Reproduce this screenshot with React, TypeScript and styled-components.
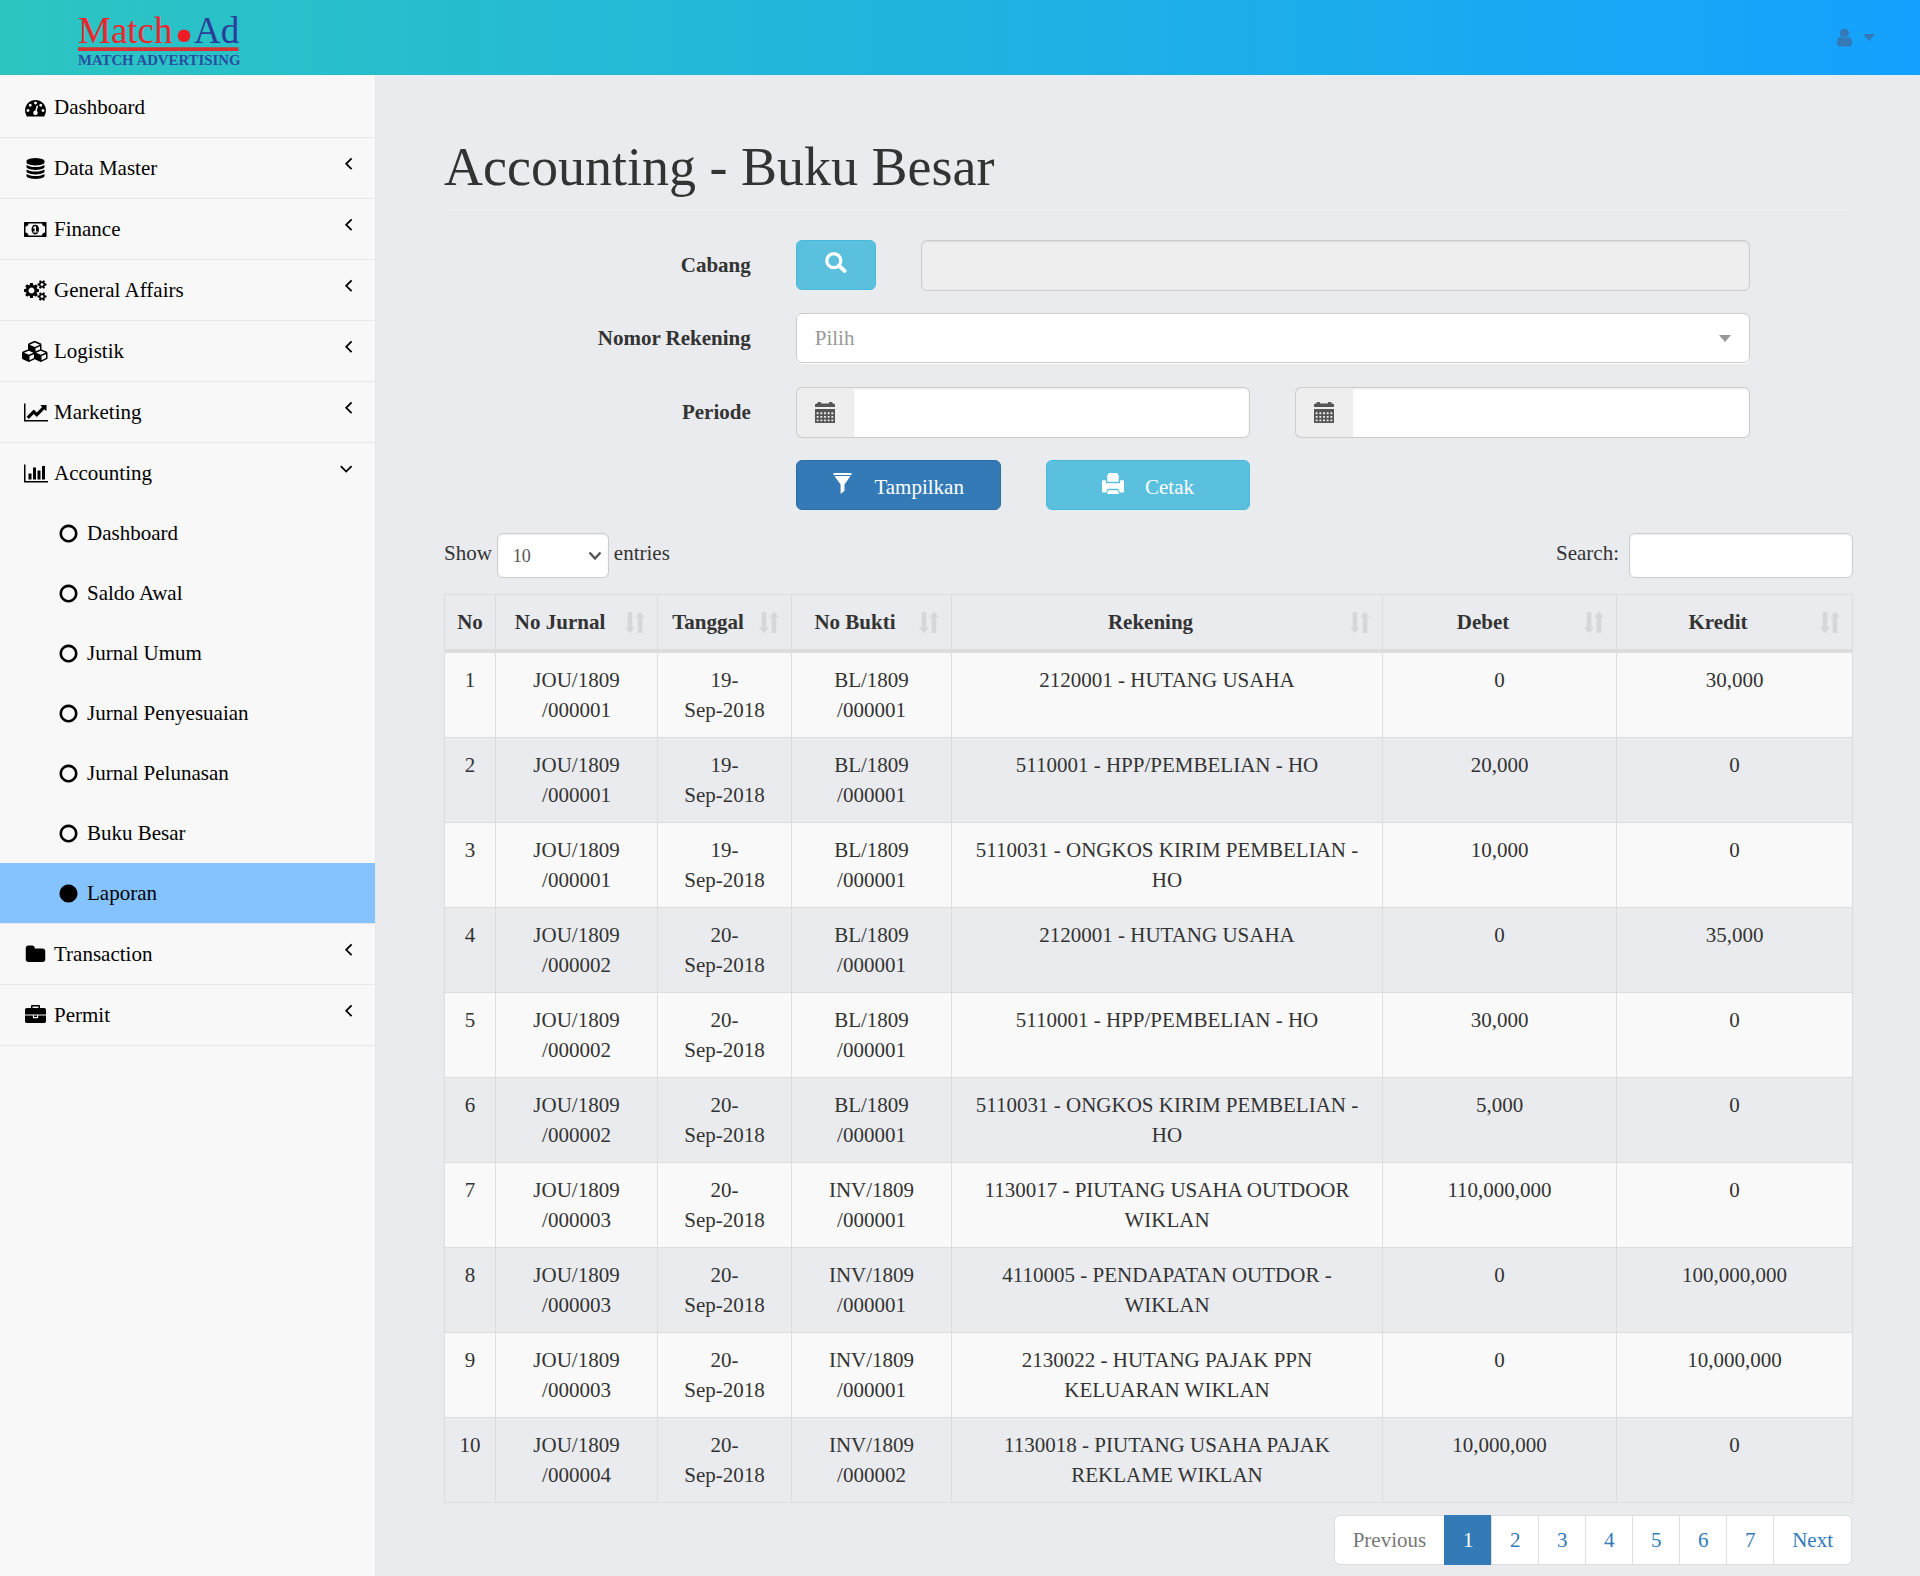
import React from "react";
import styled, { createGlobalStyle, css } from "styled-components";

const GlobalStyle = createGlobalStyle`
  *, *::before, *::after { box-sizing: border-box; }
  body {
    margin: 0;
    background: #e9ebee;
    color: #333;
    font-family: "Liberation Serif", "Times New Roman", serif;
    font-size: 21px;
    line-height: 30px;
  }
  button, input, select { font-family: inherit; font-size: inherit; line-height: inherit; color: inherit; }
  a { text-decoration: none; }
  svg { display: block; flex: none; }
`;

/* ---------- icons ---------- */

const iconPaths = {
  dashboard: {
    w: 1792,
    d: "M384 1152q0-53-37.5-90.5t-90.5-37.5-90.5 37.5-37.5 90.5 37.5 90.5 90.5 37.5 90.5-37.5 37.5-90.5zm192-448q0-53-37.5-90.5t-90.5-37.5-90.5 37.5-37.5 90.5 37.5 90.5 90.5 37.5 90.5-37.5 37.5-90.5zm428 481l101-382q6-26-7.5-48.5t-38.5-29.5-48 6.5-30 39.5l-101 382q-60 5-107 43.5t-63 98.5q-20 77 20 146t117 89 146-20 89-117q16-60-6-117t-72-91zm660-33q0-53-37.5-90.5t-90.5-37.5-90.5 37.5-37.5 90.5 37.5 90.5 90.5 37.5 90.5-37.5 37.5-90.5zm-640-640q0-53-37.5-90.5t-90.5-37.5-90.5 37.5-37.5 90.5 37.5 90.5 90.5 37.5 90.5-37.5 37.5-90.5zm448 192q0-53-37.5-90.5t-90.5-37.5-90.5 37.5-37.5 90.5 37.5 90.5 90.5 37.5 90.5-37.5 37.5-90.5zm320 448q0 261-141 483-19 29-54 29h-1402q-35 0-54-29-141-221-141-483 0-182 71-348t191-286 286-191 348-71 348 71 286 191 191 286 71 348z",
  },
  database: {
    w: 1792,
    d: "M896 768q237 0 443-43t325-127v170q0 69-103 128t-280 93.5-385 34.5-385-34.5-280-93.5-103-128v-170q119 84 325 127t443 43zm0 768q237 0 443-43t325-127v170q0 69-103 128t-280 93.5-385 34.5-385-34.5-280-93.5-103-128v-170q119 84 325 127t443 43zm0-384q237 0 443-43t325-127v170q0 69-103 128t-280 93.5-385 34.5-385-34.5-280-93.5-103-128v-170q119 84 325 127t443 43zm0-1152q208 0 385 34.5t280 93.5 103 128v128q0 69-103 128t-280 93.5-385 34.5-385-34.5-280-93.5-103-128v-128q0-69 103-128t280-93.5 385-34.5z",
  },
  money: {
    w: 1920,
    d: "M768 1152h384v-96h-128v-448h-114l-148 137 77 80q42-37 55-57h2v288h-128v96zm512-256q0 70-21 142t-59.5 134-101.5 101-138 39-138-39-101.5-101-59.5-134-21-142 21-142 59.5-134 101.5-101 138-39 138 39 101.5 101 59.5 134 21 142zm512 256v-512q-106 0-181-75t-75-181h-1152q0 106-75 181t-181 75v512q106 0 181 75t75 181h1152q0-106 75-181t181-75zm128-832v1152q0 26-19 45t-45 19h-1792q-26 0-45-19t-19-45v-1152q0-26 19-45t45-19h1792q26 0 45 19t19 45z",
  },
  gears: {
    w: 1920,
    d: "M896 896q0-106-75-181t-181-75-181 75-75 181 75 181 181 75 181-75 75-181zm768 512q0-52-38-90t-90-38-90 38-38 90q0 53 37.5 90.5t90.5 37.5 90.5-37.5 37.5-90.5zm0-1024q0-52-38-90t-90-38-90 38-38 90q0 53 37.5 90.5t90.5 37.5 90.5-37.5 37.5-90.5zm-384 421v185q0 10-7 19.5t-16 10.5l-155 24q-11 35-32 76 34 48 90 115 7 11 7 20 0 12-7 19-23 30-82.5 89.5t-78.5 59.5q-11 0-21-7l-115-90q-37 19-77 31-11 108-23 155-7 24-30 24h-186q-11 0-20-7.5t-10-17.5l-23-153q-34-10-75-31l-118 89q-7 7-20 7-11 0-21-8-144-133-144-160 0-9 7-19 10-14 41-53t47-61q-23-44-35-82l-152-24q-10-1-17-9.5t-7-19.5v-185q0-10 7-19.5t16-10.5l155-24q11-35 32-76-34-48-90-115-7-11-7-20 0-12 7-20 22-30 82-89t79-59q11 0 21 7l115 90q34-18 77-32 11-108 23-154 7-24 30-24h186q11 0 20 7.5t10 17.5l23 153q34 10 75 31l118-89q8-7 20-7 11 0 21 8 144 133 144 160 0 8-7 19-12 16-42 54t-45 60q23 48 34 82l152 23q10 2 17 10.5t7 19.5zm640 533v140q0 16-149 31-12 27-30 52 51 113 51 138 0 4-4 7-122 71-124 71-8 0-46-47t-52-68q-20 2-30 2t-30-2q-14 21-52 68t-46 47q-2 0-124-71-4-3-4-7 0-25 51-138-18-25-30-52-149-15-149-31v-140q0-16 149-31 13-29 30-52-51-113-51-138 0-4 4-7 4-2 35-20t59-34 30-16q8 0 46 46.5t52 67.5q20-2 30-2t30 2q51-71 92-112l6-2q4 0 124 70 4 3 4 7 0 25-51 138 17 23 30 52 149 15 149 31zm0-1024v140q0 16-149 31-12 27-30 52 51 113 51 138 0 4-4 7-122 71-124 71-8 0-46-47t-52-68q-20 2-30 2t-30-2q-14 21-52 68t-46 47q-2 0-124-71-4-3-4-7 0-25 51-138-18-25-30-52-149-15-149-31v-140q0-16 149-31 13-29 30-52-51-113-51-138 0-4 4-7 4-2 35-20t59-34 30-16q8 0 46 46.5t52 67.5q20-2 30-2t30 2q51-71 92-112l6-2q4 0 124 70 4 3 4 7 0 25-51 138 17 23 30 52 149 15 149 31z",
  },
  cubes: {
    w: 2304,
    d: "M640 1632l384-192v-314l-384 164v342zm-64-454l404-173-404-173-404 173zm1088 454l384-192v-314l-384 164v342zm-64-454l404-173-404-173-404 173zm-448-293l384-165v-266l-384 164v267zm-64-379l441-189-441-189-441 189zm1088 518v416q0 36-19 67t-52 47l-448 224q-25 14-57 14t-57-14l-448-224q-4-2-7-4-2 2-7 4l-448 224q-25 14-57 14t-57-14l-448-224q-33-16-52-47t-19-67v-416q0-38 21.5-70t56.5-48l434-186v-400q0-38 21.5-70t56.5-48l448-192q23-10 50-10t50 10l448 192q35 16 56.5 48t21.5 70v400l434 186q36 16 57 48t21 70z",
  },
  line: {
    w: 2048,
    d: "M2048 1536v128h-2048v-1536h128v1408h1920zm-128-1248v435q0 21-19.5 29.5t-35.5-7.5l-121-121-633 633q-10 10-23 10t-23-10l-233-233-416 416-192-192 585-585q10-10 23-10t23 10l233 233 464-464-121-121q-16-16-7.5-35.5t29.5-19.5h435q14 0 23 9t9 23z",
  },
  bar: {
    w: 2048,
    d: "M640 896v512h-256v-512h256zm384-512v1024h-256v-1024h256zm1024 1152v128h-2048v-1536h128v1408h1920zm-640-896v768h-256v-768h256zm384-384v1152h-256v-1152h256z",
  },
  folder: {
    w: 1792,
    d: "M1728 608v704q0 92-66 158t-158 66h-1216q-92 0-158-66t-66-158v-960q0-92 66-158t158-66h320q92 0 158 66t66 158v32h672q92 0 158 66t66 158z",
  },
  briefcase: {
    w: 1792,
    d: "M640 256h512v-128h-512v128zm1152 640v480q0 66-47 113t-113 47h-1472q-66 0-113-47t-47-113v-480h672v160q0 26 19 45t45 19h320q26 0 45-19t19-45v-160h672zm-768 0v128h-256v-128h256zm768-480v384h-1792v-384q0-66 47-113t113-47h352v-160q0-40 28-68t68-28h576q40 0 68 28t28 68v160h352q66 0 113 47t47 113z",
  },
  user: {
    w: 1792,
    d: "M1536 1399q0 109-62.5 187t-150.5 78h-854q-88 0-150.5-78t-62.5-187q0-85 8.5-160.5t31.5-152 58.5-131 94-89 134.5-34.5q131 128 313 128t313-128q76 0 134.5 34.5t94 89 58.5 131 31.5 152 8.5 160.5zm-256-887q0 159-112.5 271.5t-271.5 112.5-271.5-112.5-112.5-271.5 112.5-271.5 271.5-112.5 271.5 112.5 112.5 271.5z",
  },
  circleO: {
    w: 1792,
    d: "M896 352q-148 0-273 73t-198 198-73 273 73 273 198 198 273 73 273-73 198-198 73-273-73-273-198-198-273-73zm768 544q0 209-103 385.5t-279.5 279.5-385.5 103-385.5-103-279.5-279.5-103-385.5 103-385.5 279.5-279.5 385.5-103 385.5 103 279.5 279.5 103 385.5z",
  },
  circle: {
    w: 1792,
    d: "M1664 896q0 209-103 385.5t-279.5 279.5-385.5 103-385.5-103-279.5-279.5-103-385.5 103-385.5 279.5-279.5 385.5-103 385.5 103 279.5 279.5 103 385.5z",
  },
};

type IconName = keyof typeof iconPaths;

function Icon({ name }: { name: IconName }) {
  const { w, d } = iconPaths[name];
  return (
    <svg width={(w * 21) / 1792} height={21} viewBox={`0 0 ${w} 1792`} fill="currentColor" aria-hidden="true">
      <path d={d} />
    </svg>
  );
}

const AngleIcon = ({ open }: { open?: boolean }) => (
  <svg width="14" height="22" viewBox="0 0 14 22" fill="none" stroke="currentColor" strokeWidth="1.8" aria-hidden="true">
    <path d={open ? "M1.8 8.2l5.4 5.4 5.4-5.4" : "M12.6 5.4l-5.4 5.4 5.4 5.4"} />
  </svg>
);

const CaretIcon = () => (
  <svg width="12" height="7" viewBox="0 0 12 7" fill="currentColor" aria-hidden="true">
    <path d="M0 0h12l-6 7z" />
  </svg>
);

const SearchIcon = () => (
  <svg width="22" height="21" viewBox="0 0 22 21" fill="none" stroke="currentColor" aria-hidden="true">
    <circle cx="8.8" cy="8.7" r="7" strokeWidth="3.2" />
    <path d="M14.6 14.2l4.9 4.700" strokeWidth="4" strokeLinecap="round" />
  </svg>
);

const CalendarIcon = () => (
  <svg width="20" height="21" viewBox="0 0 20 21" fill="currentColor" aria-hidden="true">
    <path d="M0 5V3q0-1.500 1.500-1.500H2.500V1q0-1 1-1h1.700q1 0 1 1v.5h7.600V1q0-1 1-1h1.700q1 0 1 1v.5h1Q20 1.500 20 3v2z" />
    <path
      fillRule="evenodd"
      d="M0 7h20v14H0zM1.700 10.300v1.900h1.900v-1.900zM5.400 10.300v1.900h1.900v-1.900zM9.050 10.300v1.900h1.900v-1.900zM12.700 10.300v1.900h1.900v-1.900zM16.400 10.300v1.900h1.900v-1.900zM1.700 13.900v1.900h1.900v-1.900zM5.400 13.900v1.900h1.900v-1.900zM9.050 13.900v1.900h1.900v-1.900zM12.700 13.900v1.900h1.900v-1.900zM16.400 13.900v1.900h1.900v-1.900zM1.700 17.400v1.900h1.900v-1.900zM5.400 17.400v1.900h1.900v-1.900zM9.050 17.400v1.900h1.900v-1.900zM12.700 17.400v1.900h1.900v-1.900zM16.400 17.400v1.900h1.900v-1.900z"
    />
  </svg>
);

const FilterIcon = () => (
  <svg width="21" height="21" viewBox="0 0 21 21" fill="currentColor" aria-hidden="true">
    <path d="M1.500 0h18v1.900h-18zM2.500 3h16l-6 8.500v6.300L8.600 21v-9.500z" />
  </svg>
);

const PrintIcon = () => (
  <svg width="22" height="21" viewBox="0 0 22 21" fill="currentColor" aria-hidden="true">
    <path d="M7 0h8l1.700 2.500V8.800H5.300V2.500z" />
    <path d="M1 7.200h2.900v3.100h14.200V7.200H21q1 0 1 1v10.400q0 1-1 1h-3.300l-1.200-3.800H5.500l-1.200 3.800H1q-1 0-1-1V8.200q0-1 1-1z" />
    <path d="M6.200 17.200h9.600l1.200 3.800H5z" />
  </svg>
);

const SortIcon = () => (
  <svg width="20" height="21" viewBox="0 0 20 21" fill="currentColor" aria-hidden="true">
    <path d="M2.700 0h4.600v15.500h2.600L5.300 21h-.6L0 15.500h2.700zM12.700 21h4.600V5.500h2.600L15.300 0h-.6L10.100 5.500h2.600z" />
  </svg>
);

const ChevronIcon = () => (
  <svg width="14" height="10" viewBox="0 0 14 10" fill="none" stroke="currentColor" strokeWidth="2.400" aria-hidden="true">
    <path d="M1.500 1.500L7 7.500l5.500-6" />
  </svg>
);

const Logo = () => (
  <svg width="168" height="61" viewBox="0 0 168 61" role="img" aria-label="Match Ad">
    <g fontFamily="'Liberation Serif', serif">
      <text x="1" y="36" fontSize="37" fill="#ee262c">Match</text>
      <circle cx="107" cy="28.700" r="6.300" fill="#ee1c25" />
      <text x="117" y="36" fontSize="37" fill="#2a3d98">Ad</text>
      <path d="M1 40.300h160.500v3.700H1z" fill="#d8322f" />
      <text x="1" y="57.500" fontSize="14.800" fontWeight="bold" fill="#264f9f">MATCH ADVERTISING</text>
    </g>
  </svg>
);

/* ---------- shell ---------- */

const Page = styled.div`
  display: flex;
  flex-direction: column;
  min-height: 100vh;
`;

const TopBar = styled.header`
  display: flex;
  align-items: center;
  justify-content: space-between;
  height: 75px;
  padding: 0 45px 0 77px;
  background: linear-gradient(to right, #2cc5c1, #14a1ff);
`;

const UserButton = styled.button`
  display: flex;
  align-items: center;
  gap: 8px;
  padding: 0;
  border: 0;
  background: none;
  color: #337ab7;
`;

const Body = styled.div`
  display: flex;
  flex: 1;
`;

const Sidebar = styled.nav`
  flex: none;
  width: 376px;
  padding-top: 2px;
  border-right: 1px solid #e7e7e7;
  background: #f8f8f8;
`;

const MenuList = styled.ul`
  margin: 0;
  padding: 0;
  list-style: none;
`;

const MenuItem = styled.li`
  border-bottom: 1px solid #e7e7e7;
`;

const MenuLink = styled.a<{ $sub?: boolean; $active?: boolean }>`
  display: flex;
  align-items: flex-start;
  gap: 5px;
  height: 60px;
  padding: 15px 22px 15px ${(p) => (p.$sub ? 55 : 22)}px;
  color: #000;
  ${(p) => p.$active && css`background: #84c3ff;`}
`;

const IconSlot = styled.span`
  display: flex;
  align-items: center;
  justify-content: center;
  width: 27px;
  height: 30px;
`;

const MenuText = styled.span`
  flex: 1;
`;

const Main = styled.main`
  flex: 1;
  min-width: 0;
  padding: 63px 67px 11px 68px;
`;

const Title = styled.h1`
  margin: 0 0 30px;
  padding-bottom: 12px;
  border-bottom: 1px solid #eee;
  font-size: 54px;
  font-weight: 400;
  line-height: 59px;
`;

/* ---------- filter form ---------- */

const FilterForm = styled.form`
  display: grid;
  gap: 22px;
  margin: 0 -22px 23px -23px;
`;

const FormRow = styled.div`
  display: grid;
  grid-template-columns: repeat(12, minmax(0, 1fr));
  column-gap: 45px;
`;

const Label = styled.label`
  grid-column: span 3;
  padding-top: 10px;
  font-weight: 700;
  text-align: right;
`;

const Column = styled.div<{ $span: number; $start?: number }>`
  grid-column: ${(p) => (p.$start ? `${p.$start} / ` : "")}span ${(p) => p.$span};
  display: flex;
  align-items: flex-start;
`;

const field = css`
  min-width: 0;
  border: 1px solid #ccc;
  border-radius: 6px;
  background: #fff;
  color: #555;
  box-shadow: inset 0 1px 2px rgba(0, 0, 0, 0.08);
`;

const TextInput = styled.input`
  ${field}
  width: 100%;
  height: 51px;
  padding: 9px 18px;
  &:read-only { background: #eee; }
`;

const ActionButton = styled.button<{ $primary?: boolean }>`
  display: flex;
  align-items: baseline;
  justify-content: center;
  gap: 21px;
  width: 100%;
  height: 50px;
  padding: 11px 0 7px;
  border: 1px solid ${(p) => (p.$primary ? "#2e6da4" : "#46b8da")};
  border-radius: 6px;
  background: ${(p) => (p.$primary ? "#337ab7" : "#5bc0de")};
  color: #fff;
`;

const SelectBox = styled.div`
  position: relative;
  flex: 1;
  padding-bottom: 2px;
  color: #999;
  > svg {
    position: absolute;
    top: 22px;
    right: 19px;
    pointer-events: none;
  }
`;

const AccountSelect = styled.select`
  ${field}
  display: block;
  appearance: none;
  width: 100%;
  height: 50px;
  padding: 0 18px;
  color: #999;
  box-shadow: 0 1px 0 #fff;
`;

const InputGroup = styled.div`
  display: flex;
  flex: 1;
`;

const Addon = styled.span`
  display: flex;
  align-items: center;
  width: 58px;
  height: 51px;
  padding-left: 18px;
  border: 1px solid #ccc;
  border-right: 0;
  border-radius: 6px 0 0 6px;
  background: #eee;
  color: #555;
`;

const GroupInput = styled(TextInput)`
  flex: 1;
  border-left: 0;
  border-radius: 0 6px 6px 0;
`;

/* ---------- table ---------- */

const TableTools = styled.div`
  display: flex;
  justify-content: space-between;
  margin-bottom: 16px;
`;

const ToolLabel = styled.label<{ $gap: number }>`
  display: flex;
  gap: ${(p) => p.$gap}px;
  line-height: 40px;
`;

const LengthBox = styled.span`
  position: relative;
  width: 112px;
  color: #555;
  > svg {
    position: absolute;
    top: 18px;
    right: 7px;
    pointer-events: none;
  }
`;

const LengthSelect = styled.select`
  ${field}
  display: block;
  appearance: none;
  width: 100%;
  height: 45px;
  padding: 0 15px;
  font-size: 18px;
`;

const SearchInput = styled.input`
  ${field}
  width: 224px;
  height: 45px;
  padding: 0 15px;
  font-size: 18px;
`;

const Table = styled.table`
  width: 100%;
  table-layout: fixed;
  border-collapse: separate;
  border-spacing: 0;
  border: 1px solid #ddd;
  border-width: 1px 0 0 1px;
  text-align: center;
`;

const Col = styled.col<{ $width?: string }>`
  width: ${(p) => p.$width ?? "auto"};
`;

const HeadCell = styled.th<{ $sortable?: boolean }>`
  position: relative;
  padding: 12px ${(p) => (p.$sortable ? 45 : 9)}px 12px ${(p) => (p.$sortable ? 12 : 9)}px;
  border: 0 solid #ddd;
  border-width: 0 1px 4px 0;
  white-space: nowrap;
`;

const SortMark = styled.span`
  position: absolute;
  right: 12px;
  bottom: 16px;
  opacity: 0.1;
`;

const Row = styled.tr`
  &:nth-child(odd) { background: #f9f9f9; }
`;

const Cell = styled.td`
  height: 85px;
  padding: 12px;
  border: 0 solid #ddd;
  border-width: 0 1px 1px 0;
  vertical-align: top;
`;

const Pager = styled.ul`
  display: flex;
  justify-content: flex-end;
  margin: 12px 1px 0 0;
  padding: 0;
  list-style: none;
`;

const PageLink = styled.a<{ $number?: boolean; $state?: "active" | "disabled" }>`
  display: block;
  width: ${(p) => (p.$number ? "47px" : "auto")};
  padding: 9px ${(p) => (p.$number ? 0 : 18)}px;
  border: 1px solid #ddd;
  border-right-width: 0;
  background: #fff;
  color: #337ab7;
  text-align: center;
  li:first-child > & { border-radius: 6px 0 0 6px; }
  li:last-child > & { border-right-width: 1px; border-radius: 0 6px 6px 0; }
  ${(p) => p.$state === "disabled" && css`color: #777;`}
  ${(p) => p.$state === "active" && css`background: #337ab7; border-color: #337ab7; color: #fff;`}
`;

/* ---------- data ---------- */

type MenuEntry = { icon: IconName; text: string; arrow?: boolean; children?: string[] };

const menu: MenuEntry[] = [
  { icon: "dashboard", text: "Dashboard" },
  { icon: "database", text: "Data Master", arrow: true },
  { icon: "money", text: "Finance", arrow: true },
  { icon: "gears", text: "General Affairs", arrow: true },
  { icon: "cubes", text: "Logistik", arrow: true },
  { icon: "line", text: "Marketing", arrow: true },
  {
    icon: "bar",
    text: "Accounting",
    arrow: true,
    children: ["Dashboard", "Saldo Awal", "Jurnal Umum", "Jurnal Penyesuaian", "Jurnal Pelunasan", "Buku Besar", "Laporan"],
  },
  { icon: "folder", text: "Transaction", arrow: true },
  { icon: "briefcase", text: "Permit", arrow: true },
];

const columns = [
  { title: "No", width: "51px" },
  { title: "No Jurnal", width: "162px" },
  { title: "Tanggal", width: "134px" },
  { title: "No Bukti", width: "160px" },
  { title: "Rekening", width: "431px" },
  { title: "Debet", width: "234px" },
  { title: "Kredit" },
];

// Journal, date and voucher numbers are stored as [first line, second line].
type Pair = [string, string];
const entries: [Pair, Pair, Pair, string, string, string][] = [
  [["JOU/1809", "/000001"], ["19-", "Sep-2018"], ["BL/1809", "/000001"], "2120001 - HUTANG USAHA", "0", "30,000"],
  [["JOU/1809", "/000001"], ["19-", "Sep-2018"], ["BL/1809", "/000001"], "5110001 - HPP/PEMBELIAN - HO", "20,000", "0"],
  [["JOU/1809", "/000001"], ["19-", "Sep-2018"], ["BL/1809", "/000001"], "5110031 - ONGKOS KIRIM PEMBELIAN - HO", "10,000", "0"],
  [["JOU/1809", "/000002"], ["20-", "Sep-2018"], ["BL/1809", "/000001"], "2120001 - HUTANG USAHA", "0", "35,000"],
  [["JOU/1809", "/000002"], ["20-", "Sep-2018"], ["BL/1809", "/000001"], "5110001 - HPP/PEMBELIAN - HO", "30,000", "0"],
  [["JOU/1809", "/000002"], ["20-", "Sep-2018"], ["BL/1809", "/000001"], "5110031 - ONGKOS KIRIM PEMBELIAN - HO", "5,000", "0"],
  [["JOU/1809", "/000003"], ["20-", "Sep-2018"], ["INV/1809", "/000001"], "1130017 - PIUTANG USAHA OUTDOOR WIKLAN", "110,000,000", "0"],
  [["JOU/1809", "/000003"], ["20-", "Sep-2018"], ["INV/1809", "/000001"], "4110005 - PENDAPATAN OUTDOR - WIKLAN", "0", "100,000,000"],
  [["JOU/1809", "/000003"], ["20-", "Sep-2018"], ["INV/1809", "/000001"], "2130022 - HUTANG PAJAK PPN KELUARAN WIKLAN", "0", "10,000,000"],
  [["JOU/1809", "/000004"], ["20-", "Sep-2018"], ["INV/1809", "/000002"], "1130018 - PIUTANG USAHA PAJAK REKLAME WIKLAN", "10,000,000", "0"],
];

const pages = ["Previous", "1", "2", "3", "4", "5", "6", "7", "Next"];

const TwoLines = ({ value }: { value: Pair }) => (
  <>
    {value[0]}
    <br />
    {value[1]}
  </>
);

export default function App() {
  return (
    <Page>
      <GlobalStyle />
      <TopBar>
        <Logo />
        <UserButton type="button" aria-label="User menu">
          <Icon name="user" />
          <CaretIcon />
        </UserButton>
      </TopBar>
      <Body>
        <Sidebar>
          <MenuList>
            {menu.map((item) => (
              <MenuItem key={item.text}>
                <MenuLink href="#">
                  <IconSlot><Icon name={item.icon} /></IconSlot>
                  <MenuText>{item.text}</MenuText>
                  {item.arrow && <AngleIcon open={!!item.children} />}
                </MenuLink>
                {item.children && (
                  <MenuList>
                    {item.children.map((text) => (
                      <li key={text}>
                        <MenuLink href="#" $sub $active={text === "Laporan"}>
                          <IconSlot><Icon name={text === "Laporan" ? "circle" : "circleO"} /></IconSlot>
                          <MenuText>{text}</MenuText>
                        </MenuLink>
                      </li>
                    ))}
                  </MenuList>
                )}
              </MenuItem>
            ))}
          </MenuList>
        </Sidebar>
        <Main>
          <Title>Accounting - Buku Besar</Title>
          <FilterForm onSubmit={(e) => e.preventDefault()}>
            <FormRow>
              <Label htmlFor="cabang">Cabang</Label>
              <Column $span={1}>
                <ActionButton type="button" aria-label="Cari cabang"><SearchIcon /></ActionButton>
              </Column>
              <Column $span={7}><TextInput id="cabang" readOnly /></Column>
            </FormRow>
            <FormRow>
              <Label htmlFor="rekening">Nomor Rekening</Label>
              <Column $span={8}>
                <SelectBox>
                  <AccountSelect id="rekening"><option>Pilih</option></AccountSelect>
                  <CaretIcon />
                </SelectBox>
              </Column>
            </FormRow>
            <FormRow>
              <Label htmlFor="periode-awal">Periode</Label>
              <Column $span={4}>
                <InputGroup>
                  <Addon><CalendarIcon /></Addon>
                  <GroupInput id="periode-awal" />
                </InputGroup>
              </Column>
              <Column $span={4}>
                <InputGroup>
                  <Addon><CalendarIcon /></Addon>
                  <GroupInput id="periode-akhir" aria-label="Periode akhir" />
                </InputGroup>
              </Column>
            </FormRow>
            <FormRow>
              <Column $start={4} $span={2}>
                <ActionButton type="submit" $primary><FilterIcon />Tampilkan</ActionButton>
              </Column>
              <Column $span={2}>
                <ActionButton type="button"><PrintIcon />Cetak</ActionButton>
              </Column>
            </FormRow>
          </FilterForm>

          <TableTools>
            <ToolLabel $gap={5}>
              Show
              <LengthBox>
                <LengthSelect><option>10</option></LengthSelect>
                <ChevronIcon />
              </LengthBox>
              entries
            </ToolLabel>
            <ToolLabel $gap={10}>
              Search:
              <SearchInput type="search" />
            </ToolLabel>
          </TableTools>

          <Table>
            <colgroup>
              {columns.map((c) => <Col key={c.title} $width={c.width} />)}
            </colgroup>
            <thead>
              <tr>
                {columns.map((c, i) => (
                  <HeadCell key={c.title} $sortable={i > 0} scope="col">
                    {c.title}
                    {i > 0 && <SortMark><SortIcon /></SortMark>}
                  </HeadCell>
                ))}
              </tr>
            </thead>
            <tbody>
              {entries.map(([journal, date, voucher, account, debit, credit], i) => (
                <Row key={i}>
                  <Cell>{i + 1}</Cell>
                  <Cell><TwoLines value={journal} /></Cell>
                  <Cell><TwoLines value={date} /></Cell>
                  <Cell><TwoLines value={voucher} /></Cell>
                  <Cell>{account}</Cell>
                  <Cell>{debit}</Cell>
                  <Cell>{credit}</Cell>
                </Row>
              ))}
            </tbody>
          </Table>

          <Pager>
            {pages.map((p) => (
              <li key={p}>
                <PageLink
                  href="#"
                  $number={p.length === 1}
                  $state={p === "1" ? "active" : p === "Previous" ? "disabled" : undefined}
                >
                  {p}
                </PageLink>
              </li>
            ))}
          </Pager>
        </Main>
      </Body>
    </Page>
  );
}
